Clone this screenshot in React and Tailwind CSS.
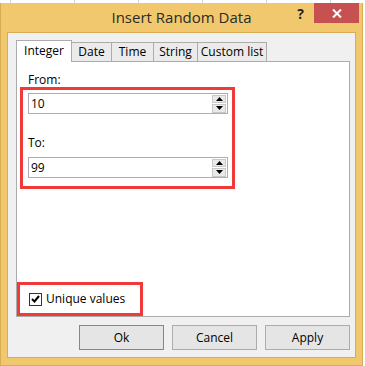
import React from 'react';

const font = { fontFamily: '"Open Sans", "Noto Sans", sans-serif' };

function SpinInput({ value }) {
  return (
    <div className="flex h-[21px] w-[200px] items-center justify-between border border-[#abadb3] bg-white pl-[2px] pr-[1px]">
      <span className="text-[12px] leading-none text-black">{value}</span>
      <div className="flex flex-col gap-[1px]">
        <div className="flex h-[8px] w-[14px] items-center justify-center border border-[#c8c8c8] bg-[#e9e9e9]">
          <svg width="7" height="4" viewBox="0 0 7 4"><path d="M0 4 L3.5 0 L7 4 Z" fill="#000" /></svg>
        </div>
        <div className="flex h-[9px] w-[14px] items-center justify-center border border-[#c8c8c8] bg-[#e9e9e9]">
          <svg width="7" height="4" viewBox="0 0 7 4"><path d="M0 0 L3.5 4 L7 0 Z" fill="#000" /></svg>
        </div>
      </div>
    </div>
  );
}

export default function App() {
  const tabs = ['Date', 'Time', 'String', 'Custom list'];
  const tabWidths = ['w-[40px]', 'w-[42px]', 'w-[44px]', 'w-[69px]'];

  return (
    <div className="h-[366px] w-[365px] overflow-hidden bg-white" style={font}>
      {/* spreadsheet grid behind the dialog */}
      <div className="flex h-[3px]">
        <div className="w-[11px] border-r border-[#d4d4d4]" />
        <div className="w-[64px] border-r border-[#d4d4d4]" />
        <div className="w-[64px] border-r border-[#d4d4d4]" />
        <div className="w-[64px] border-r border-[#d4d4d4]" />
        <div className="w-[64px] border-r border-[#d4d4d4]" />
        <div className="w-[64px] border-r border-[#d4d4d4]" />
      </div>

      {/* dialog window */}
      <div className="flex h-[363px] w-[363px] flex-col border-x border-b border-[#d9ab52] bg-[#f1c86d]">
        {/* title bar */}
        <div className="grid h-[29px] grid-cols-[1fr_auto_1fr]">
          <div />
          <div className="pt-[4px] text-[15px] leading-[20px] text-[#2b2b2b]">Insert Random Data</div>
          <div className="flex items-start justify-end">
            <span className="mr-[10px] mt-[1px] text-[14px] font-bold leading-[20px] text-[#222]">?</span>
            <div className="mr-[3px] flex h-[20px] w-[45px] items-center justify-center bg-[#c75050]">
              <svg width="10" height="9" viewBox="0 0 10 9">
                <path d="M1 0.5 L9 8.5 M9 0.5 L1 8.5" stroke="#fff" strokeWidth="2" />
              </svg>
            </div>
          </div>
        </div>

        {/* client area */}
        <div className="mx-[6px] mb-[7px] flex flex-1 flex-col border border-[#d9ab52] bg-[#f0f0f0] pl-[8px] pr-[5px] pt-[7px]">
          {/* tabs */}
          <div className="flex items-end">
            <div className="z-10 -mb-[1px] flex h-[22px] w-[56px] items-start justify-center border border-b-0 border-[#acacac] bg-white pt-[2px] text-[12px] leading-[16px] text-black">
              Integer
            </div>
            {tabs.map((t, i) => (
              <div
                key={t}
                className={`flex h-[19px] ${tabWidths[i]} items-center justify-center border border-l-0 border-b-0 border-[#acacac] bg-[#ebebeb] text-[12px] leading-none text-black`}
              >
                {t}
              </div>
            ))}
          </div>

          {/* tab panel */}
          <div className="flex h-[256px] flex-col border border-[#acacac] bg-white">
            <div className="ml-[11px] mt-[11px] text-[12px] leading-[14px] text-black">From:</div>
            <div className="ml-[3px] w-[215px] border-[3px] border-[#f03a3a] pb-[8px] pl-[5px] pt-[3px]">
              <SpinInput value="10" />
              <div className="mt-[22px] text-[12px] leading-[14px] text-black">To:</div>
              <div className="mt-[7px]">
                <SpinInput value="99" />
              </div>
            </div>

            <div className="flex-1" />

            <div className="flex h-[34px] w-[126px] items-center border-[3px] border-[#f03a3a] pl-[9px]">
              <div className="flex h-[13px] w-[13px] items-center justify-center border border-[#333] bg-white">
                <svg width="9" height="8" viewBox="0 0 9 8">
                  <path d="M1 4 L3.5 6.5 L8 1" stroke="#000" strokeWidth="2" fill="none" />
                </svg>
              </div>
              <span className="ml-[4px] text-[12px] leading-none text-black">Unique values</span>
            </div>
          </div>

          {/* buttons */}
          <div className="mt-[8px] flex justify-end gap-[8px]">
            <button className="h-[25px] w-[85px] border border-[#3c9be8] bg-[#e5e5e5] text-[12px] text-black">Ok</button>
            <button className="h-[25px] w-[85px] border border-[#acacac] bg-[#e5e5e5] text-[12px] text-black">Cancel</button>
            <button className="h-[25px] w-[85px] border border-[#acacac] bg-[#e5e5e5] text-[12px] text-black">Apply</button>
          </div>
        </div>
      </div>
    </div>
  );
}
